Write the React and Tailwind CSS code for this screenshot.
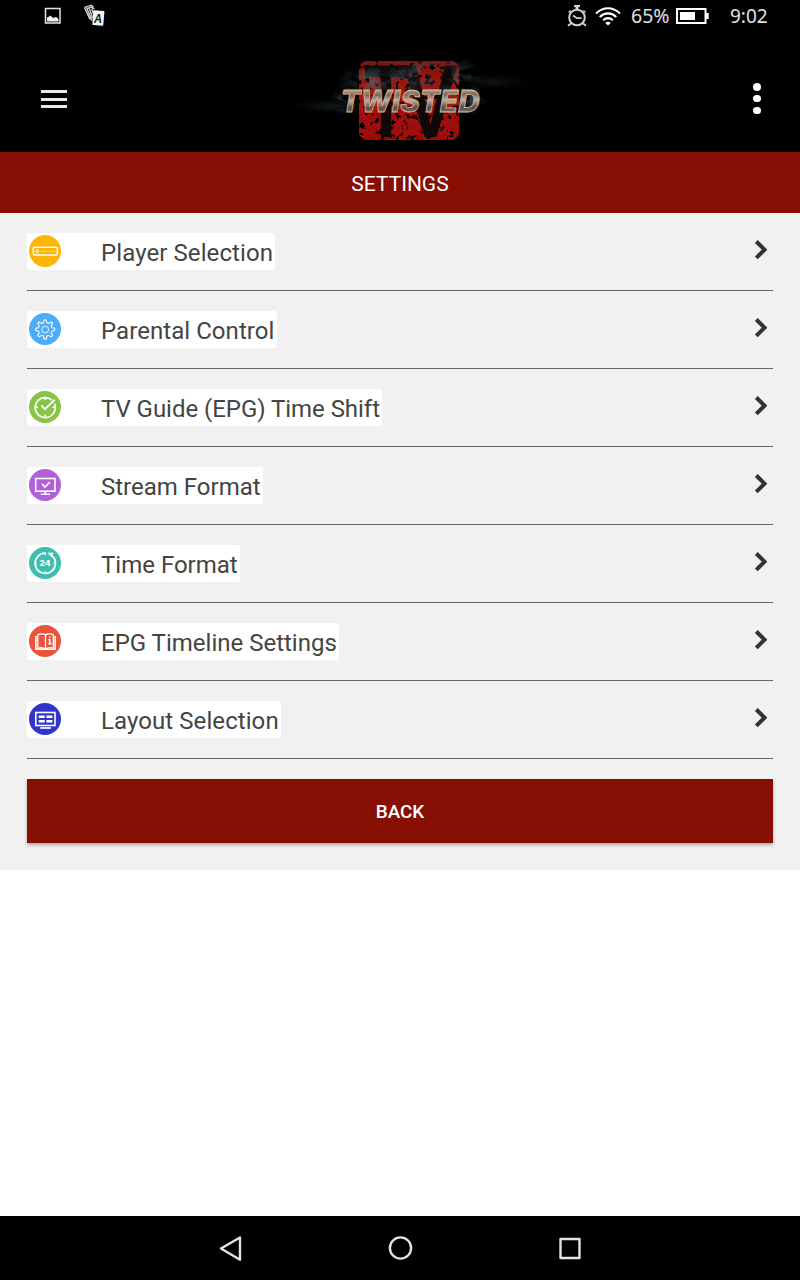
import React from "react";

const settings = [
  { label: "Player Selection", color: "#ffb508", icon: PlayerIcon, width: "w-[248px]", textWidth: "tracking-[0.09px]" },
  { label: "Parental Control", color: "#4dacf8", icon: GearIcon, width: "w-[250px]", textWidth: "tracking-[0.06px]" },
  { label: "TV Guide (EPG) Time Shift", color: "#88c547", icon: ClockCheckIcon, width: "w-[355px]", textWidth: "tracking-[-0.04px]" },
  { label: "Stream Format", color: "#b25fdb", icon: MonitorIcon, width: "w-[236px]", textWidth: "tracking-normal" },
  { label: "Time Format", color: "#3dbeae", icon: Hours24Icon, width: "w-[213px]", textWidth: "tracking-normal" },
  { label: "EPG Timeline Settings", color: "#e9543a", icon: BookIcon, width: "w-[312px]", textWidth: "tracking-normal" },
  { label: "Layout Selection", color: "#3036cb", icon: LayoutIcon, width: "w-[254px]", textWidth: "tracking-[0.08px]" },
];

function PlayerIcon() {
  return (
    <>
      <rect x="4.3" y="12.3" width="24" height="7.6" rx="1.2" strokeWidth="1.5" />
      <circle cx="8.2" cy="16.2" r="1.4" />
      <path d="M12.5 16.3h11.5" strokeWidth="1" strokeDasharray="1.5 0.5" opacity="0.6" />
      <path d="M24.5 16.3h1.2" opacity="0.8" />
    </>
  );
}

function GearIcon() {
  return (
    <g transform="translate(16.2 16.4) scale(0.93) translate(-16.1 -16.5)">
      <path
        d="M14.9 6.3h2.4l.6 3 2 .8 2.6-1.7 1.7 1.7-1.7 2.6.8 2 3 .6v2.4l-3 .6-.8 2 1.7 2.6-1.7 1.7-2.6-1.7-2 .8-.6 3h-2.4l-.6-3-2-.8-2.6 1.7L8 22.9l1.7-2.600-.8-2-3-.6v-2.400l3-.6.8-2L8 10.100l1.700-1.700 2.600 1.700 2-.8z"
        strokeWidth="1.1"
        strokeLinejoin="round"
      />
      <circle cx="16.1" cy="16.500" r="3.500" strokeWidth="1.1" opacity="0.8" />
    </g>
  );
}

function ClockCheckIcon() {
  return (
    <>
      <path d="M25.4 12.5A10 10 0 1 1 22.8 9" strokeWidth="1.7" />
      <path d="M16.2 6.5v2.6M16.2 23.5v2.7M6.5 16.3h2.6M23.3 16.3h2.8" strokeWidth="1.5" />
      <path d="M12.3 14.3l3.7 3.8 9.7-9.3" strokeWidth="1.9" />
    </>
  );
}

function MonitorIcon() {
  return (
    <>
      <rect x="6.7" y="9.5" width="19.3" height="12.7" strokeWidth="1.6" />
      <path d="M12.8 14.8l3.2 3.3 4.700-4.900" strokeWidth="1.7" />
      <path d="M16.3 22.5v2.6M11.8 25.2h9.2" strokeWidth="1.6" />
    </>
  );
}

function Hours24Icon() {
  return (
    <>
      <path d="M22.6 8.4A10.100 10.100 0 1 1 16.8 6.2" strokeWidth="1.8" />
      <path d="M19 6.2l5-.2-1.500 3.8z" fill="#fff" strokeWidth="0.8" />
      <path d="M16.5 6v2.300M6.2 16.2h1.8M24.5 16.2h1.8M16.2 24v2" strokeWidth="1.1" />
      <text
        x="16"
        y="19"
        fill="#fff"
        stroke="none"
        fontSize="8"
        fontWeight="800"
        fontFamily="Inter, sans-serif"
        textAnchor="middle"
        textLength="11"
        lengthAdjust="spacingAndGlyphs"
      >
        24
      </text>
    </>
  );
}

function BookIcon() {
  return (
    <>
      <path d="M6.9 11v13.300h19.200V11" strokeWidth="1.600" />
      <path d="M16.5 24V10M16.500 10c-1.800-1.400-5.500-1.400-7.700-.2v12.700M16.500 10c1.800-1.400 5.500-1.400 7.800-.2v12.700" strokeWidth="1.300" />
      <path d="M7.500 23.500c3-1 7-.9 9 .6 2-1.500 6-1.600 9-.6" strokeWidth="1.600" />
      <path d="M19.200 14.800h1.600v3.800M19.200 18.700h3.400M20.700 11.500v1.600" strokeWidth="1.500" />
    </>
  );
}

function LayoutIcon() {
  return (
    <>
      <rect x="6.8" y="9.5" width="19.2" height="13" strokeWidth="1.600" />
      <path d="M9.7 13.800h6M17.400 13.800h6M9.700 18.300h6M17.400 18.300h6" strokeWidth="2.500" />
      <path d="M11.200 25h10.600" strokeWidth="1.700" />
    </>
  );
}

function StatusBar() {
  return (
    <div className="flex h-8 items-center bg-black text-[19px] text-[#e0e0e0]">
      <svg className="ml-[44px] h-[18px] w-[18px]" viewBox="0 0 18 18">
        <rect x="1.5" y="1.5" width="14.5" height="14.5" fill="none" stroke="#e6e6e6" strokeWidth="1.5" />
        <path d="M3 14.500v-4l1.500-.5 1.500-1.500 2 1.500 1.500 1 2-1 1.500.5 1.500 1.500v2.500z" fill="#f0f0f0" />
      </svg>
      <svg className="ml-[21px] h-[24px] w-[24px]" viewBox="0 0 24 24">
        <path d="M1.5 3.5L8.500 1.200l2 2M3.500 5l5-2 3 2M1.500 3.500L7 15.500M4 4.700l5 12M6.500 5l3 9M9 4.500l1 5" fill="none" stroke="#d0d0d0" strokeWidth="1.400" />
        <path d="M11.100 6.300l9.500.6c.6 0 .9.4.8 1l-1.100 13c0 .6-.5.9-1 .8L10.200 21c-.6 0-.9-.5-.8-1l.8-12.800c0-.5.4-.9.900-.9z" fill="#f3f3f3" />
        <text x="11" y="19" fontSize="13" fontWeight="700" fontStyle="italic" fontFamily="Liberation Sans, sans-serif" fill="#111" textLength="8" lengthAdjust="spacingAndGlyphs">
          A
        </text>
      </svg>

      <svg className="ml-[459px] h-[24px] w-[22px]" viewBox="0 0 22 24" fill="none" stroke="#d2d2d2">
        <circle cx="11" cy="13.5" r="7.800" strokeWidth="2" />
        <path d="M8 2h6M5 19.500l-3 2.300M17 19.500l3 2.300" strokeWidth="2" />
        <path d="M11 2v3.500" strokeWidth="3" />
        <path d="M2.600 8.500l2-2M19.400 8.500l-2-2" strokeWidth="1.500" />
        <path d="M7 11.500l4 2.700h4.500" strokeWidth="1.800" />
      </svg>
      <svg className="ml-[7px] h-[20px] w-[26px]" viewBox="0 0 26 20" fill="none" stroke="#fff" strokeWidth="2.200">
        <path d="M1 7.500c7-7 17-7 24 0M4.700 11c5-4.800 11.600-4.800 16.600 0M8.200 14.300c3-2.700 6.600-2.700 9.600 0" />
        <path d="M13 19.500l-2.700-2.600c1.500-1.500 3.900-1.500 5.400 0z" fill="#fff" stroke="none" />
      </svg>
      <span className="ml-[10px] w-[40px] whitespace-nowrap text-[19.5px]">65%</span>
      <svg className="ml-[5px] h-[16px] w-[33px]" viewBox="0 0 33 16">
        <rect x="1" y="1" width="28.5" height="14" fill="none" stroke="#fff" strokeWidth="2" />
        <rect x="4" y="4" width="15" height="8" fill="#fff" />
        <rect x="30" y="5" width="2.7" height="6" fill="#fff" />
      </svg>
      <span className="ml-[21px]">9:02</span>
    </div>
  );
}

function Logo() {
  return (
    <svg className="h-[100px] w-[250px]" viewBox="0 0 250 100">
      <defs>
        <linearGradient id="metal" x1="0" y1="0" x2="0.04" y2="1">
          <stop offset="0.1" stopColor="#d9cdbb" />
          <stop offset="0.35" stopColor="#75675c" />
          <stop offset="0.5" stopColor="#bdb0a3" />
          <stop offset="0.7" stopColor="#574d48" />
          <stop offset="1" stopColor="#a3917f" />
        </linearGradient>
        <linearGradient id="edge" x1="0" x2="1">
          <stop offset="0" stopColor="#efa55e" />
          <stop offset="0.45" stopColor="#dfb594" />
          <stop offset="1" stopColor="#d8c6ad" />
        </linearGradient>
        <linearGradient id="plate" x1="0" y1="0" x2="0" y2="1">
          <stop offset="0" stopColor="#7e1512" />
          <stop offset="0.4" stopColor="#a8150f" />
          <stop offset="1" stopColor="#9f0c06" />
        </linearGradient>
        <radialGradient id="smoke">
          <stop offset="0" stopColor="#57707c" stopOpacity="0.65" />
          <stop offset="1" stopColor="#26343b" stopOpacity="0" />
        </radialGradient>
        <filter id="grunge" x="-5%" y="-5%" width="110%" height="110%">
          <feTurbulence type="fractalNoise" baseFrequency="0.2" numOctaves="3" seed="8" result="noise" />
          <feColorMatrix in="noise" type="matrix" values="0 0 0 0 0  0 0 0 0 0  0 0 0 0 0  0 0 0 8 -2.500" result="holes" />
          <feComposite in="SourceGraphic" in2="holes" operator="in" />
        </filter>
        <filter id="wisps" x="-10%" y="-10%" width="120%" height="120%">
          <feTurbulence type="fractalNoise" baseFrequency="0.07 0.1" numOctaves="4" seed="3" result="noise" />
          <feColorMatrix in="noise" type="matrix" values="0 0 0 0 0  0 0 0 0 0  0 0 0 0 0  5 0 0 0 -2.100" result="mask" />
          <feComposite in="SourceGraphic" in2="mask" operator="in" />
        </filter>
      </defs>

      <ellipse cx="52" cy="56" rx="44" ry="8" fill="url(#smoke)" opacity="0.35" />
      <ellipse cx="213" cy="32" rx="38" ry="8" fill="url(#smoke)" opacity="0.3" />
      <g filter="url(#grunge)">
        <rect x="79" y="11" width="100" height="79" rx="8" fill="url(#plate)" />
      </g>
      {/* Dark TV lettering over the red plate */}
      <g fontFamily="Liberation Sans, sans-serif" fontWeight="700" fill="#0d0909">
        <text x="84" y="87" fontSize="104" textLength="44" lengthAdjust="spacingAndGlyphs">T</text>
        <text x="123" y="87" fontSize="104" textLength="55" lengthAdjust="spacingAndGlyphs">V</text>
      </g>
      <g filter="url(#wisps)">
        <ellipse cx="90" cy="31" rx="34" ry="23" fill="url(#smoke)" />
        <ellipse cx="132" cy="25" rx="38" ry="21" fill="url(#smoke)" />
        <ellipse cx="180" cy="30" rx="27" ry="25" fill="url(#smoke)" />
        <ellipse cx="66" cy="50" rx="18" ry="17" fill="url(#smoke)" />
        <ellipse cx="193" cy="51" rx="17" ry="16" fill="url(#smoke)" />
      </g>
      <text
        x="60.5"
        y="62"
        fontFamily="Inter, sans-serif"
        fontWeight="800"
        fontStyle="italic"
        fontSize="30"
        textLength="139"
        lengthAdjust="spacingAndGlyphs"
        fill="url(#metal)"
        stroke="url(#edge)"
        strokeWidth="0.8"
      >
        TWISTED
      </text>
    </svg>
  );
}

function Toolbar() {
  return (
    <header className="flex h-[120px] bg-black">
      <button className="ml-[41px] mt-[58px] flex h-[18px] w-[26px] flex-col justify-between" aria-label="Menu">
        <span className="h-[3px] w-full bg-[#e8e8e8]" />
        <span className="h-[3px] w-full bg-[#e8e8e8]" />
        <span className="h-[3px] w-full bg-[#e8e8e8]" />
      </button>
      <div className="ml-[213px] mt-[18px]">
        <Logo />
      </div>
      <button className="ml-[223px] mt-[51px] flex h-[31px] w-2 flex-col justify-between" aria-label="More options">
        <span className="h-[7.5px] w-[7.5px] rounded-full bg-white" />
        <span className="h-[7.5px] w-[7.5px] rounded-full bg-white" />
        <span className="h-[7.5px] w-[7.5px] rounded-full bg-white" />
      </button>
    </header>
  );
}

function SettingRow({ item }) {
  const Icon = item.icon;

  return (
    <li className="flex h-[78px] items-start justify-between border-b border-[#666666] pt-5">
      <div className={`flex h-[37px] rounded-[3px] bg-white pl-[2px] pt-[2px] ${item.width}`}>
        <svg className="h-8 w-8 shrink-0" viewBox="0 0 32 32" fill="none" stroke="#fff">
          <circle cx="16" cy="16" r="16" fill={item.color} stroke="none" />
          <Icon />
        </svg>
        <span className={`ml-10 whitespace-nowrap text-[24px] leading-[36px] text-[#444444] ${item.textWidth}`}>
          {item.label}
        </span>
      </div>
      <svg className="mr-[5px] mt-[7px] h-5 w-[14px]" viewBox="0 0 14 20" fill="none" stroke="#333" strokeWidth="4">
        <path d="M2.3 1.5l8.200 8.200-8.200 8.200" />
      </svg>
    </li>
  );
}

function NavBar() {
  return (
    <nav className="flex h-16 bg-black">
      <svg className="h-16 w-full" viewBox="0 0 800 64" fill="none" stroke="#e3e3e3" strokeWidth="2.4" strokeLinejoin="round">
        <path d="M240 21.500v22.300l-19-11.300z" />
        <circle cx="400.5" cy="32" r="10.6" />
        <rect x="560.5" y="23" width="19" height="19" />
      </svg>
    </nav>
  );
}

export default function App() {
  return (
    <div className="flex h-[1280px] w-[800px] flex-col overflow-hidden bg-white font-['Roboto',sans-serif]">
      <div className="font-['Noto_Sans',sans-serif]">
        <StatusBar />
      </div>
      <Toolbar />
      <div className="flex h-[61px] items-center justify-center bg-[#870e02] pt-[4px] text-[21px] text-white">
        SETTINGS
      </div>

      <main className="h-[657px] bg-[#f1f1f1] px-[27px]">
        <ul>
          {settings.map((item) => (
            <SettingRow key={item.label} item={item} />
          ))}
        </ul>
        <button className="mt-5 h-16 w-full bg-[#870e02] pt-[2px] text-[18.9px] font-medium text-white shadow-[0_2px_3px_rgba(0,0,0,0.3)]">
          BACK
        </button>
      </main>

      <div className="flex-1" />
      <NavBar />
    </div>
  );
}
